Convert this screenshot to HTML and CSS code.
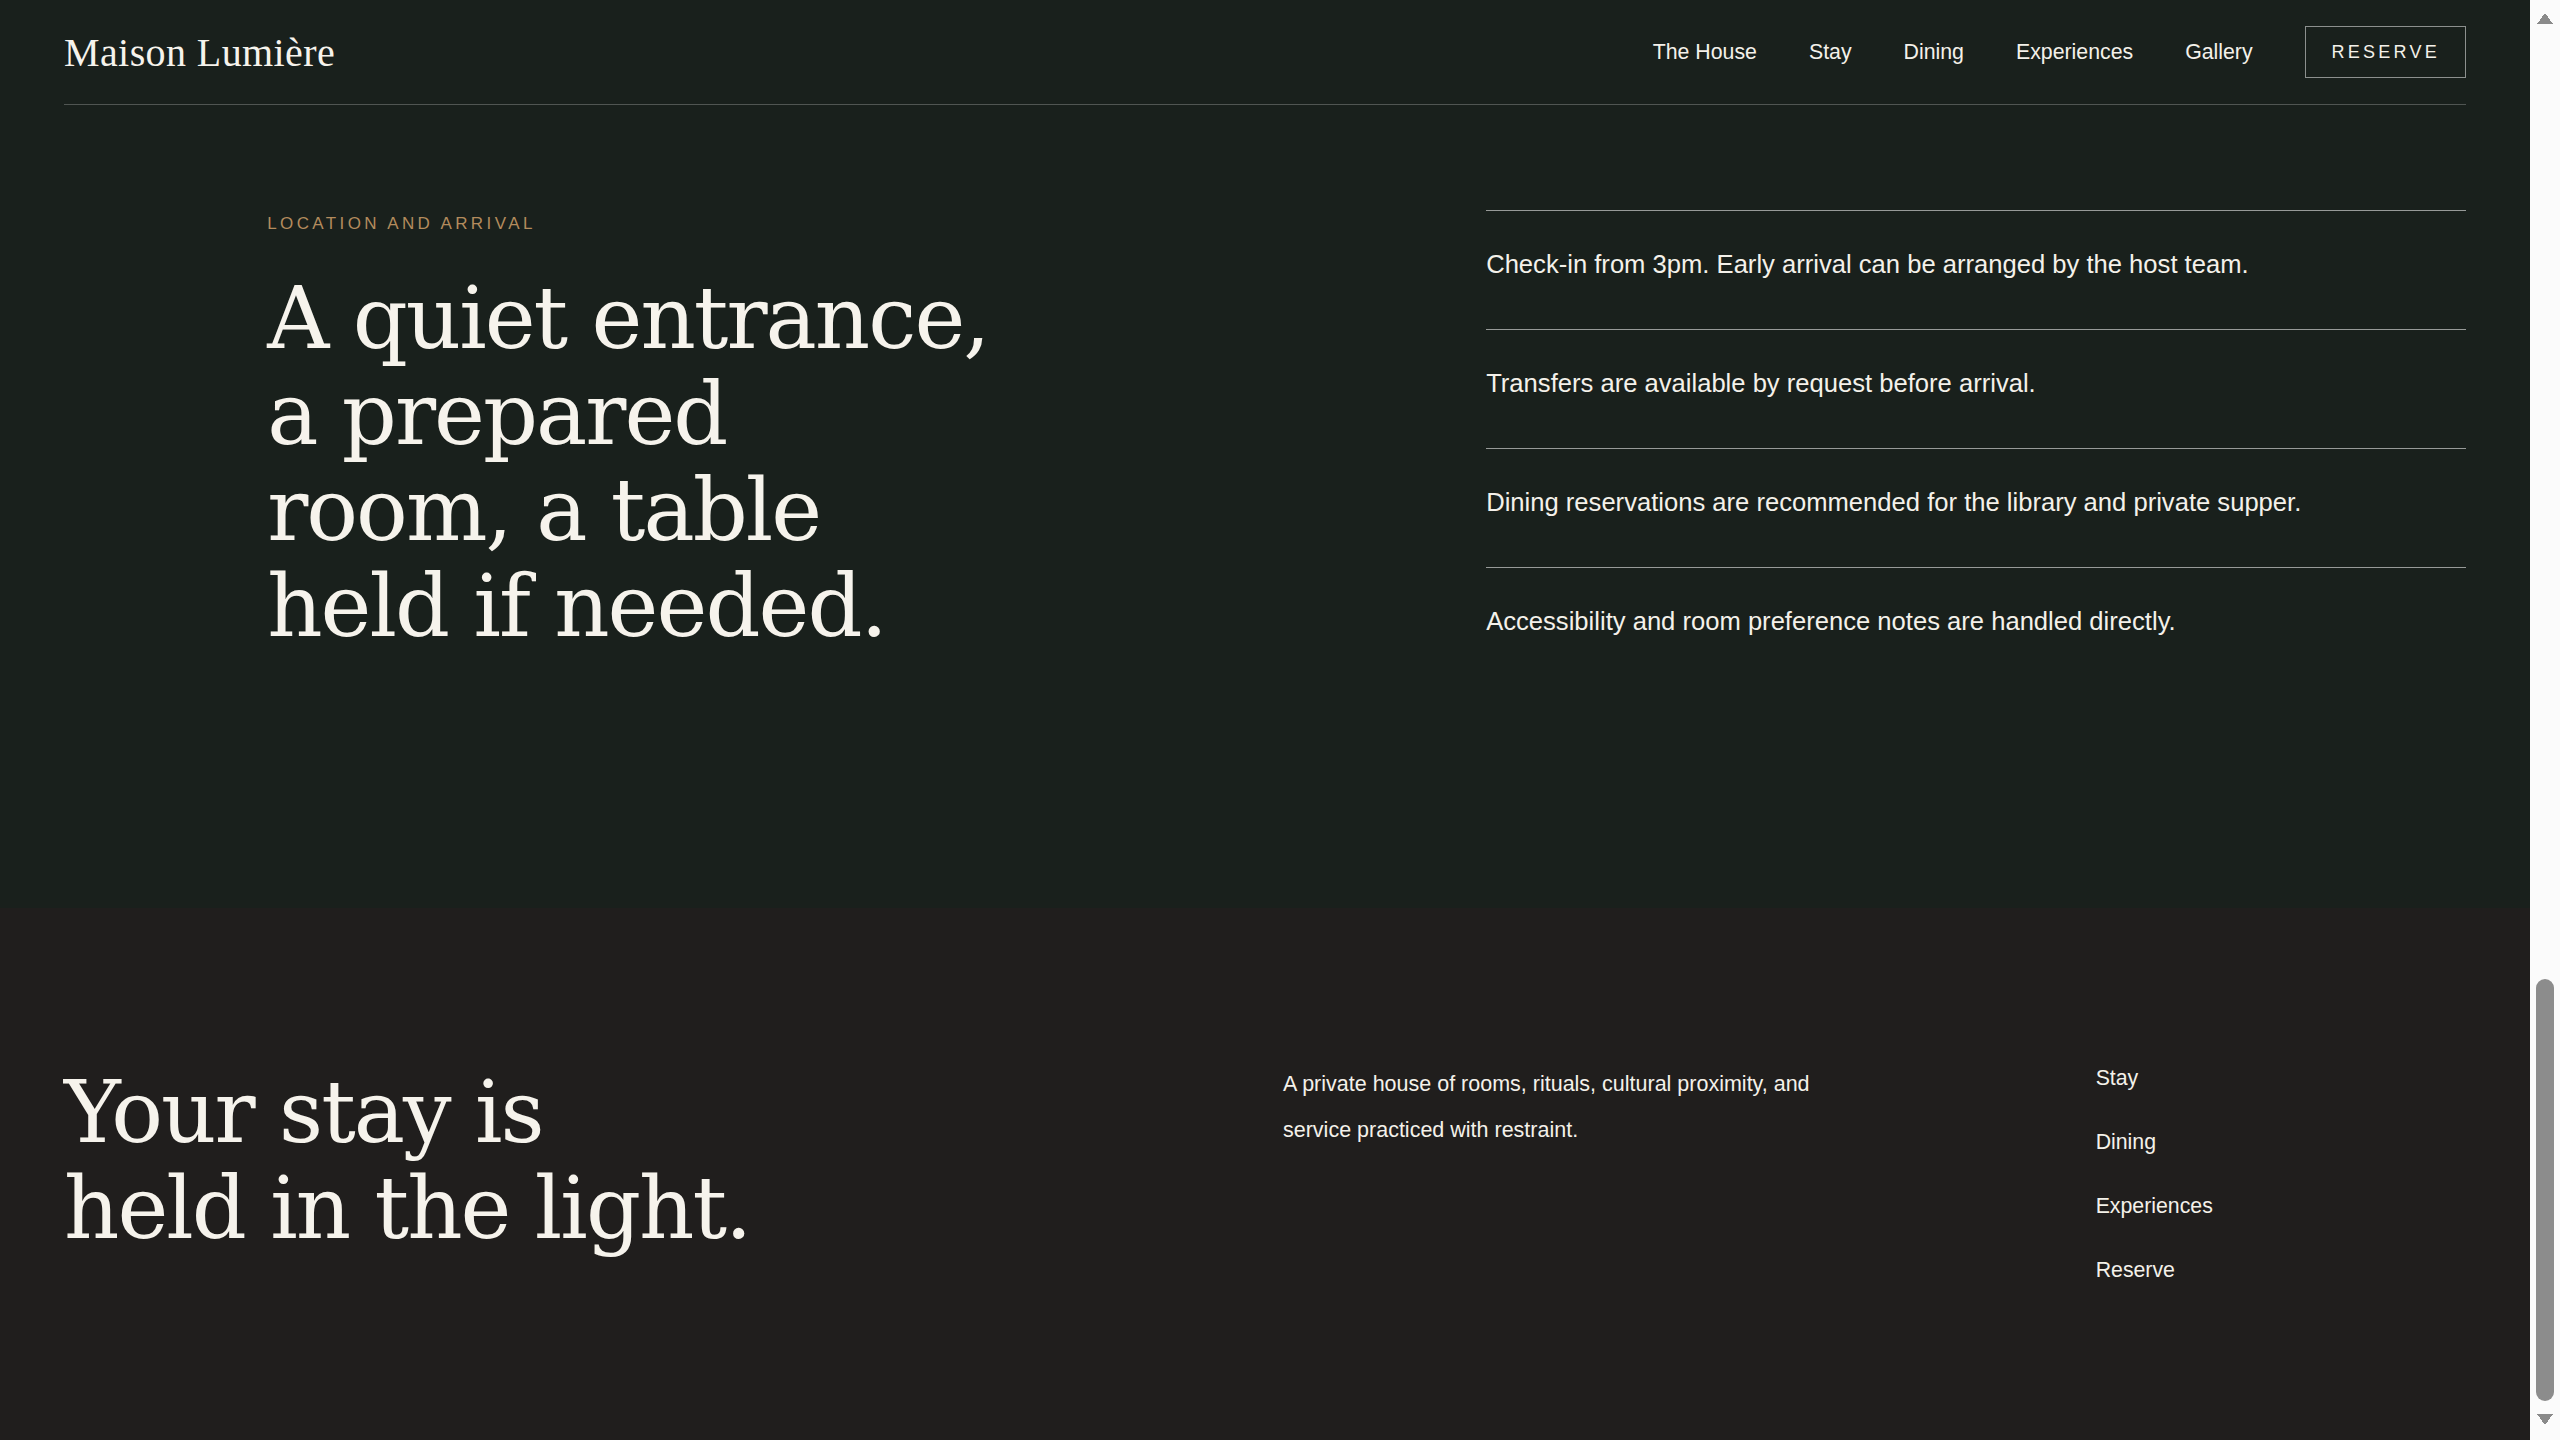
FILE: index.html
```html
<!DOCTYPE html>
<html lang="en">
<head>
    <meta charset="UTF-8">
    <meta name="viewport" content="width=device-width, initial-scale=1.0">
    <title>Maison Lumière — Location and Arrival</title>
    <link rel="stylesheet" href="styles.css">
</head>
<body>
    <header class="site-header">
        <div class="header-inner">
            <a class="logo" href="#">Maison Lumière</a>
            <nav class="main-nav">
                <a href="#">The House</a>
                <a href="#">Stay</a>
                <a href="#">Dining</a>
                <a href="#">Experiences</a>
                <a href="#">Gallery</a>
                <a class="reserve-btn" href="#">Reserve</a>
            </nav>
        </div>
    </header>

    <main>
        <section class="arrival">
            <div class="arrival-intro">
                <p class="eyebrow">Location and Arrival</p>
                <h2 class="display">A quiet entrance,<br>a prepared<br>room, a table<br>held if needed.</h2>
            </div>
            <ul class="arrival-notes">
                <li>Check-in from 3pm. Early arrival can be arranged by the host team.</li>
                <li>Transfers are available by request before arrival.</li>
                <li>Dining reservations are recommended for the library and private supper.</li>
                <li>Accessibility and room preference notes are handled directly.</li>
            </ul>
        </section>
    </main>

    <footer class="site-footer">
        <h2 class="display footer-title">Your stay is<br>held in the light.</h2>
        <p class="footer-about">A private house of rooms, rituals, cultural proximity, and service practiced with restraint.</p>
        <ul class="footer-links">
            <li><a href="#">Stay</a></li>
            <li><a href="#">Dining</a></li>
            <li><a href="#">Experiences</a></li>
            <li><a href="#">Reserve</a></li>
        </ul>
    </footer>
</body>
</html>
```

FILE: styles.css
```css
html {
    background-color: #fbfbfb; /* scrollbar track strip */
}
body {
    margin: 0 30px 0 0;
    background-color: #19201c;
    color: #f4f1ea;
    font-family: "Liberation Sans", Arial, sans-serif;
}
/* scrollbar arrows + thumb, page is read at its bottom */
body::before {
    content: "";
    position: fixed;
    top: 0;
    right: 0;
    width: 30px;
    height: 100%;
    background:
        linear-gradient(to top left, #8a8a8a 50%, transparent 50%) 7px 13px / 8px 11px no-repeat,
        linear-gradient(to top right, #8a8a8a 50%, transparent 50%) 15px 13px / 8px 11px no-repeat,
        linear-gradient(to bottom left, #8a8a8a 50%, transparent 50%) 7px 1414px / 8px 11px no-repeat,
        linear-gradient(to bottom right, #8a8a8a 50%, transparent 50%) 15px 1414px / 8px 11px no-repeat;
}
body::after {
    content: "";
    position: fixed;
    top: 979px;
    right: 6px;
    width: 18px;
    height: 422px;
    border-radius: 9px;
    background-color: #8c8c8c;
}
a {
    color: inherit;
    text-decoration: none;
}
ul {
    list-style: none;
    margin: 0;
    padding: 0;
}

/* header */
.site-header {
    padding: 0 64px;
}
.header-inner {
    height: 104px;
    display: flex;
    align-items: center;
    justify-content: space-between;
    border-bottom: 1px solid rgba(255, 255, 255, 0.24);
}
.logo {
    font-family: "Liberation Serif", "Times New Roman", serif;
    font-size: 40px;
    letter-spacing: 0.01em;
    color: #f6f3ec;
}
.main-nav {
    display: flex;
    align-items: center;
    gap: 52px;
    font-size: 21.3px;
}
.reserve-btn {
    border: 1px solid rgba(255, 255, 255, 0.5);
    padding: 15px 25px 15px 26px;
    font-size: 18px;
    line-height: 20px;
    letter-spacing: 0.18em;
    text-transform: uppercase;
}

/* shared display heading */
.display {
    margin: 0;
    font-family: "DejaVu Serif", Georgia, serif;
    font-weight: normal;
    font-size: 86px;
    line-height: 96px;
    letter-spacing: -0.023em;
    color: #f6f3ec;
}

/* location and arrival */
.arrival {
    display: grid;
    grid-template-columns: repeat(12, minmax(0, 1fr));
    column-gap: 36px;
    padding: 105px 64px 222px;
}
.arrival-intro {
    grid-column: 2 / 7;
}
.eyebrow {
    margin: 0 0 33px;
    font-size: 17px;
    line-height: 27px;
    letter-spacing: 0.2em;
    text-transform: uppercase;
    color: #b38b5d;
}
.arrival-notes {
    grid-column: 8 / 13;
}
.arrival-notes li {
    border-top: 1px solid rgba(255, 255, 255, 0.55);
    padding: 33px 0 44px;
    font-size: 25.6px;
    line-height: 41px;
}

/* footer */
.site-footer {
    background-color: #201e1d;
    display: grid;
    grid-template-columns: repeat(12, minmax(0, 1fr));
    column-gap: 36px;
    align-items: start;
    padding: 154px 64px 154px;
}
.footer-title {
    grid-column: 1 / 7;
    margin-top: 2px;
}
.footer-about {
    grid-column: 7 / 11;
    max-width: 560px;
    margin: 0;
    font-size: 21.5px;
    line-height: 45.5px;
}
.footer-links {
    grid-column: 11 / 13;
    display: flex;
    flex-direction: column;
    gap: 32px;
    font-size: 21.3px;
    line-height: 32px;
}
```
